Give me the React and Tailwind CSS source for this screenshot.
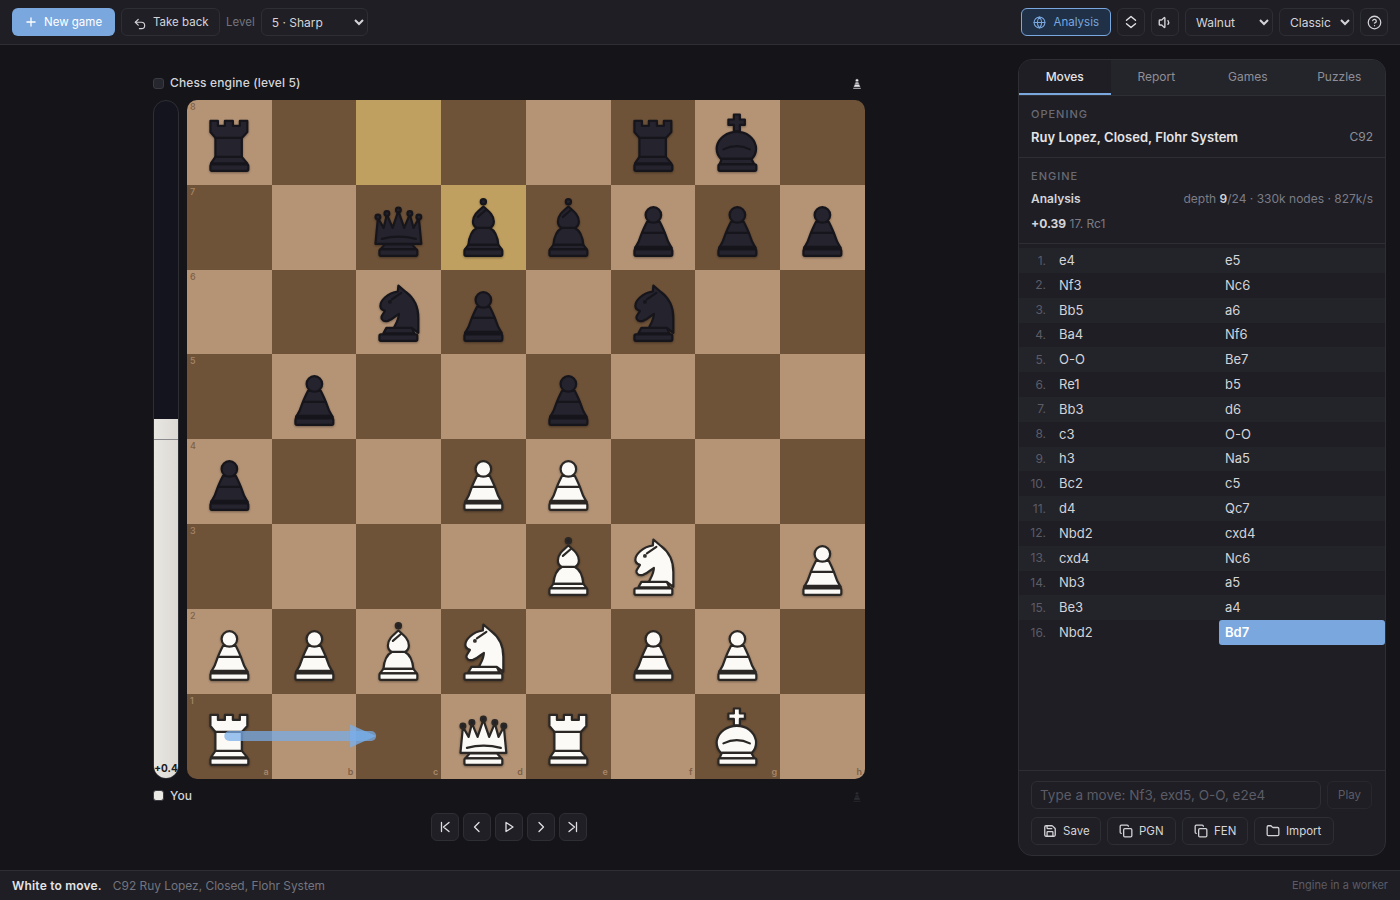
import React from 'react';
import { Plus, Undo2, Globe, Volume1, CircleHelp, Save, Copy, Folder } from 'lucide-react';

const Base = () => <rect x="23.5" y="64.5" width="38" height="6.5" rx="1.5" />;
const PawnShape = () => (
  <>
    <path d="M36 37C34 41 32.5 44 31 48C29.5 53 27 59 24 63.5H61C58 59 55.5 53 54 48C52.5 44 51 41 49 37Z" />
    <circle cx="42.5" cy="30" r="7.8" />
    <path d="M31.5 48H53.5" fill="none" />
    <path d="M25 62.5H60" fill="none" strokeWidth="3" />
    <Base />
  </>
);
const pieces = {
  p: () => <PawnShape />,
  r: () => (
    <>
      <path d="M23.5 21H31V26H38V21H46V26H53V21H60.5V32L55 38V57L60.5 63.5H24L28.5 57V38L23.5 32Z" />
      <path d="M28.5 38H55M28.5 57H55" fill="none" />
      <Base />
    </>
  ),
  n: () => (
    <>
      <path d="M30.5 58H56L58.5 63.5H27.5Z" />
      <path d="M42.5 15.5L50 22C58 28 62.5 37 62.5 48L62.5 63L56 58H38C41 52 43 49 43 44C39 46 38 49 32 51C28 52 25 50 25.5 47C26 45 28 43 29 41C26 40 24 38 24.5 35C25 31 31 23 42 21.5Z" />
      <path d="M45.5 23L36 29.5" fill="none" />
      <circle cx="34" cy="32" r="0.8" />
      <Base />
    </>
  ),
  b: () => (
    <>
      <circle cx="42.5" cy="16.7" r="2.6" fill="#23222a" />
      <path d="M36 43C30 46 28 54 27.5 60H57.5C57 54 55 46 49 43Z" />
      <path d="M42.5 21.5C36 27 32 31 32 36.5C32 40 34 42 36 43H49C51 42 53 40 53 36.5C53 31 49 27 42.5 21.5Z" />
      <path d="M37 32L45 25" fill="none" />
      <path d="M27.5 60L24 64.5H61L57.5 60Z" />
      <Base />
    </>
  ),
  q: () => (
    <>
      <path d="M29 59.5L24.5 64.5H60.5L56 59.5Z" />
      <path d="M19.5 59L22 33L27.7 43L31 29.5L36.7 43L42.5 26L48.3 43L54 29.5L57.7 43L63 33L65.5 59Z" />
      <path d="M26 54Q42.5 49.5 60 54" fill="none" />
      <circle cx="22" cy="32" r="2.4" fill="#23222a" />
      <circle cx="31" cy="28.5" r="2.4" fill="#23222a" />
      <circle cx="42.5" cy="25" r="2.4" fill="#23222a" />
      <circle cx="54" cy="28.5" r="2.4" fill="#23222a" />
      <circle cx="63" cy="32" r="2.4" fill="#23222a" />
      <Base />
    </>
  ),
  k: () => (
    <>
      <path d="M39 14.5H45V19.5H50V25H45V31.5H39V25H33.5V19.5H39Z" />
      <path d="M26 59C21 54 21.5 49 22 46C24 38 32 32 42 32C52 32 59 38 61 46C61.5 49 62 54 57 59Z" />
      <path d="M28.5 49.5Q42 43 55 49.5" fill="none" />
      <path d="M27 59L24.5 64.5H59.5L56.5 59Z" />
      <Base />
    </>
  ),
};

const Piece = ({ c }) => {
  const light = c === c.toUpperCase();
  return (
    <svg viewBox="0 0 85 85" className="absolute inset-0 w-full h-full drop-shadow-[0_1px_1px_rgba(0,0,0,0.35)]" fill={light ? '#fbfaf6' : '#25232e'} stroke={light ? '#2a2724' : '#16151b'} strokeWidth="2.2" strokeLinejoin="round" strokeLinecap="round">
      {pieces[c.toLowerCase()]()}
    </svg>
  );
};

const rows = [
  'r....rk.',
  '..qbbppp',
  '..np.n..',
  '.p..p...',
  'p..PP...',
  '....BN.P',
  'PPBN.PP.',
  'R..QR.K.',
];
const files = 'abcdefgh';
const hl = { '0-2': 1, '1-3': 1 };

const Board = () => (
  <div className="relative grid grid-cols-8 grid-rows-8 w-[678.1px] h-[678.5px] ml-[-0.05px] rounded-[10px] overflow-hidden">
    {rows.flatMap((row, r) =>
      row.split('').map((ch, f) => {
        const isLight = (r + f) % 2 === 0;
        const bg = hl[`${r}-${f}`] ? 'bg-[#c0a060]' : isLight ? 'bg-[#b59476]' : 'bg-[#6f5339]';
        const coord = isLight ? 'text-[#6f5339]/80' : 'text-[#b59476]/80';
        return (
          <div key={`${r}-${f}`} className={`relative ${bg}`}>
            {f === 0 && <span className={`absolute left-[3px] top-[1px] text-[9px] leading-[12px] font-medium ${coord}`}>{8 - r}</span>}
            {r === 7 && <span className={`absolute right-[3px] bottom-[1px] text-[9px] leading-[12px] font-semibold ${coord}`}>{files[f]}</span>}
            {ch !== '.' && <Piece c={ch} />}
          </div>
        );
      })
    )}
    <svg className="absolute inset-0 w-full h-full pointer-events-none" viewBox="0 0 678 679">
      <path d="M42 636.5H184" stroke="#78aeeb" strokeWidth="10" strokeLinecap="round" opacity="0.72" />
      <path d="M163 625L189 636.5L163 648Z" fill="#78aeeb" opacity="0.8" />
    </svg>
  </div>
);

const Label = ({ children }) => <span className="pt-[2px] whitespace-nowrap">{children}</span>;

const Btn = ({ children, className = '' }) => (
  <button className={`flex items-center gap-[6px] h-7 rounded-md border border-[#2e2e35] bg-[#1f1f25] text-[#d4d4d8] text-[11.5px] ${className}`}>{children}</button>
);

const Sel = ({ w, children }) => (
  <select className={`h-7 ${w} rounded-md border border-[#2e2e35] bg-[#1f1f25] text-[#d4d4d8] text-[12px] pl-[6px] [color-scheme:dark]`}>
    <option>{children}</option>
  </select>
);

const Diamond = () => (
  <svg viewBox="0 0 14 14" className="w-[14px] h-[14px]" fill="none" stroke="#e4e4e7" strokeWidth="1.4" strokeLinecap="round" strokeLinejoin="round">
    <path d="M2.5 5.2L7 1.5L11.5 5.2M2.5 8.8L7 12.5L11.5 8.8" />
  </svg>
);

const moves = [
  ['e4', 'e5'], ['Nf3', 'Nc6'], ['Bb5', 'a6'], ['Ba4', 'Nf6'], ['O-O', 'Be7'], ['Re1', 'b5'], ['Bb3', 'd6'], ['c3', 'O-O'],
  ['h3', 'Na5'], ['Bc2', 'c5'], ['d4', 'Qc7'], ['Nbd2', 'cxd4'], ['cxd4', 'Nc6'], ['Nb3', 'a5'], ['Be3', 'a4'], ['Nbd2', 'Bd7'],
];

const Nav = ({ d }) => (
  <button className="flex items-center justify-center w-7 h-7 rounded-md border border-[#2e2e35] bg-[#1f1f25]">
    <svg viewBox="0 0 14 14" className="w-[14px] h-[14px]" fill="none" stroke="#e0e0e4" strokeWidth="1.3" strokeLinejoin="round" strokeLinecap="round"><path d={d} /></svg>
  </button>
);

const SmallPawn = ({ fill, stroke }) => (
  <svg viewBox="0 0 85 85" className="w-[18px] h-[18px] mr-[-1px]" fill={fill} stroke={stroke} strokeWidth="3"><PawnShape /></svg>
);

export default function App() {
  return (
    <div className="flex flex-col w-[1400px] h-[900px] bg-[#141419] overflow-hidden" style={{ fontFamily: 'Inter, "Liberation Sans", sans-serif' }}>
      <header className="flex items-center justify-between shrink-0 h-[45px] px-3 bg-[#1e1e24] border-b border-[#2e2e35]">
        <div className="flex items-center gap-[6px]">
          <button className="flex items-center gap-[6px] w-[103px] h-7 px-3 rounded-md bg-[#7aa7de] text-white text-[11.5px]">
            <Plus size={14} strokeWidth={2.2} /><Label>New game</Label>
          </button>
          <Btn className="w-[99px] pl-[11px]"><Undo2 size={14} strokeWidth={2} className="mt-[3px]" /><Label>Take back</Label></Btn>
          <span className="pt-[2px] text-[11.5px] text-[#74747e]">Level</span>
          <Sel w="w-[107px]">5 · Sharp</Sel>
        </div>
        <div className="flex items-center gap-[6px]">
          <button className="flex items-center gap-[7px] h-7 px-[11px] rounded-md border border-[#7aa7de] bg-[#1f3047] text-[#7aa7de] text-[11.5px]">
            <Globe size={13} strokeWidth={2} className="mr-[1px]" /><Label>Analysis</Label>
          </button>
          <Btn className="w-7 justify-center"><Diamond /></Btn>
          <Btn className="w-7 justify-center"><Volume1 size={15} strokeWidth={2.2} /></Btn>
          <Sel w="w-[88px]">Walnut</Sel>
          <Sel w="w-[75px]">Classic</Sel>
          <Btn className="w-7 justify-center"><CircleHelp size={15} strokeWidth={2} /></Btn>
        </div>
      </header>

      <main className="flex flex-1 min-h-0">
        <section className="flex flex-col items-center w-[1018px] shrink-0 pt-[27px]">
          <div className="flex flex-col w-[712px]">
            <div className="flex items-center justify-between h-[28.05px] pb-[6px]">
              <div className="flex items-center gap-[6px]">
                <span className="w-[11px] h-[11px] rounded-[3px] bg-[#26262e] border border-[#3a3a42]" />
                <span className="text-[12px] tracking-[0.14px] font-medium text-[#d4d4d8]">Chess engine (level 5)</span>
              </div>
              <SmallPawn fill="#e8e8ea" stroke="#141419" />
            </div>
            <div className="flex gap-[8px]">
              <div className="relative flex flex-col justify-end w-[26px] h-[678.5px] rounded-full overflow-hidden bg-[#14141f] border border-[#2e2e35]">
                <div className="h-[359px] bg-gradient-to-r from-[#e9e7e2] to-[#dcd9d4]" />
                <div className="absolute left-0 right-0 top-[338px] h-px bg-[#8a8a8e]" />
                <span className="absolute bottom-[4px] left-0 right-0 text-center text-[10px] leading-[12px] font-bold text-[#1a1a20] whitespace-nowrap">+0.4</span>
              </div>
              <Board />
            </div>
            <div className="flex items-center justify-between h-[34px]">
              <div className="flex items-center gap-[6px]">
                <span className="w-[11px] h-[11px] rounded-[3px] bg-[#eceae5] border border-[#3a3a42]" />
                <span className="text-[12px] tracking-[0.14px] font-medium text-[#d4d4d8]">You</span>
              </div>
              <SmallPawn fill="#2c2c33" stroke="#141419" />
            </div>
          </div>
          <div className="flex justify-center gap-1">
            <Nav d="M3.5 2.5V11.5M11 2.5L5.5 7L11 11.5" />
            <Nav d="M9 2.5L4.5 7L9 11.5" />
            <Nav d="M4 2.5L11 7L4 11.5Z" />
            <Nav d="M5 2.5L9.5 7L5 11.5" />
            <Nav d="M10.5 2.5V11.5M3 2.5L8.5 7L3 11.5" />
          </div>
        </section>

        <aside className="flex flex-col w-[368px] mt-[14px] mb-[14px] rounded-[14px] border border-[#2e2e35] bg-[#1e1e24] overflow-hidden">
          <div className="grid grid-cols-4 shrink-0 h-[36px] bg-[#24242b] border-b border-[#2e2e35]">
            {['Moves', 'Report', 'Games', 'Puzzles'].map((t, i) => (
              <div key={t} className={`flex items-center justify-center h-[35px] border-b-2 text-[12px] ${i === 0 ? 'bg-[#1e1e24] text-[#e4e4e7] font-medium border-[#7aa7de]' : 'border-transparent text-[#8e8e96]'}`}>{t}</div>
            ))}
          </div>
          <div className="shrink-0 h-[62px] px-3 pt-[12px] border-b border-[#2e2e35]">
            <div className="text-[11px] leading-[13px] tracking-[1px] font-medium text-[#6a6a74]">OPENING</div>
            <div className="flex items-center justify-between mt-[7px] text-[13px] leading-[18px]">
              <span className="font-semibold tracking-[0.03px] text-[#e4e4e7]">Ruy Lopez, Closed, Flohr System</span>
              <span className="text-[12px] text-[#8e8e96]">C92</span>
            </div>
          </div>
          <div className="shrink-0 h-[86px] px-3 pt-[12px] border-b border-[#2e2e35]">
            <div className="text-[11px] leading-[13px] tracking-[1px] font-medium text-[#6a6a74]">ENGINE</div>
            <div className="flex items-center justify-between mt-[8px] leading-[16px]">
              <span className="text-[12px] font-semibold text-[#d4d4d8]">Analysis</span>
              <span className="text-[12px] text-[#7c7c86]">depth <b className="font-semibold text-[#d4d4d8]">9</b>/24 · 330k nodes · 827k/s</span>
            </div>
            <div className="mt-[9px] text-[12px] leading-[16px] text-[#7c7c86]">
              <b className="font-bold text-[#d4d4d8]">+0.39</b> 17. Rc1
            </div>
          </div>
          <div className="flex-1 min-h-0 pt-[4.3px]">
            {moves.map(([w, b], i) => (
              <div key={i} className={`grid grid-cols-[34px_1fr_1fr] items-center h-[24.8px] text-[13px] ${i % 2 === 0 ? 'bg-[#23232a]' : ''}`}>
                <span className="text-right pr-[7px] text-[12px] text-[#5c5c66]">{i + 1}.</span>
                <span className="pl-[6px] text-[#d4d4d8]">{w}</span>
                <span className={`flex items-center h-full pl-[6px] rounded-[3px] ${i === 15 ? 'bg-[#7aa7de] text-white font-semibold' : 'text-[#d4d4d8]'}`}>{b}</span>
              </div>
            ))}
          </div>
          <div className="shrink-0 h-[85px] px-3 pt-[10px] border-t border-[#2e2e35]">
            <div className="flex gap-[6px]">
              <input readOnly placeholder="Type a move: Nf3, exd5, O-O, e2e4" className="w-[290px] h-7 px-2 rounded-md border border-[#2e2e35] bg-[#1e1e24] text-[13.5px] placeholder:text-[#5c5c66] outline-none" />
              <button className="w-[45px] h-7 pt-[2px] rounded-md border border-[#27272d] text-[11.5px] text-[#5c5c66]">Play</button>
            </div>
            <div className="flex gap-[6px] mt-[8px]">
              <Btn className="w-[70px] pl-[11px]"><Save size={14} strokeWidth={2.2} /><Label>Save</Label></Btn>
              <Btn className="w-[69px] pl-[11px]"><Copy size={14} strokeWidth={2.2} /><Label>PGN</Label></Btn>
              <Btn className="w-[66px] pl-[11px]"><Copy size={14} strokeWidth={2.2} /><Label>FEN</Label></Btn>
              <Btn className="w-[80px] pl-[11px]"><Folder size={14} strokeWidth={2.2} /><Label>Import</Label></Btn>
            </div>
          </div>
        </aside>
      </main>

      <footer className="flex items-center justify-between shrink-0 h-[30px] px-3 bg-[#1e1e24] border-t border-[#2e2e35] text-[12px]">
        <div className="flex items-center gap-[11px]">
          <span className="font-semibold tracking-[0.2px] text-[#e4e4e7]">White to move.</span>
          <span className="text-[11.9px] text-[#74747e]">C92 Ruy Lopez, Closed, Flohr System</span>
        </div>
        <span className="text-[11px] text-[#5c5c66]">Engine in a worker</span>
      </footer>
    </div>
  );
}
